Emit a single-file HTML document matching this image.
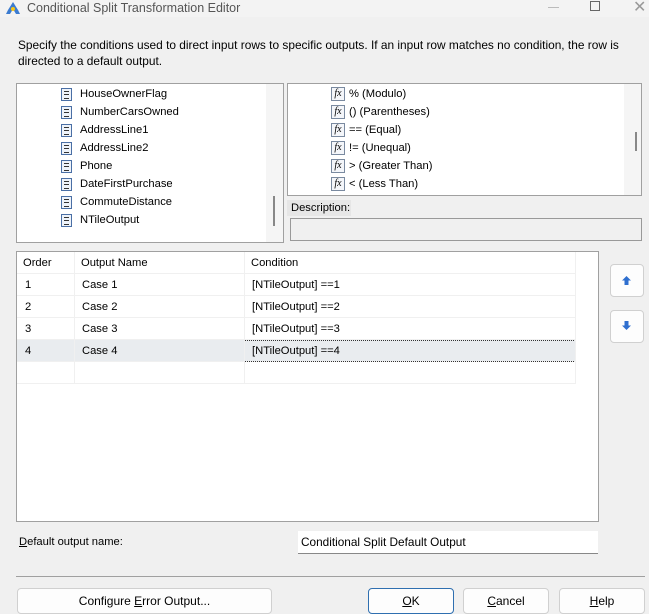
<!DOCTYPE html>
<html><head><style>
*{box-sizing:border-box;margin:0;padding:0}
body{width:649px;height:613px;background:#f0f0f0;font-family:"Liberation Sans",sans-serif;font-size:11.2px;color:#000;position:relative;overflow:hidden}
.a{position:absolute}
.t{position:absolute;white-space:nowrap}
.box{position:absolute;background:#fff;border:1px solid #a0a0a0}
.ic{position:absolute;width:11px;height:13px;border:1px solid #4a6fa5;background:#eef3fa}
.ic:before{content:"";position:absolute;left:2px;top:2px;width:5px;height:6px;border-top:1px solid #333;border-bottom:1px solid #333}
.ic:after{content:"";position:absolute;left:2px;top:5px;width:5px;border-top:1px solid #333}
.fx{position:absolute;width:14px;height:14px;border:1px solid #7a8aa0;background:#f4f6fa;font-family:"Liberation Serif",serif;font-style:italic;font-size:10px;line-height:12px;text-align:center}
.btn{position:absolute;background:#fdfdfd;border:1px solid #d0d0d0;border-radius:4px;text-align:center;font-size:12px;line-height:24px}
.row{position:absolute;left:0;width:559px;height:22px;border-bottom:1px solid #f0f0f0}
.row span{position:absolute;top:5px}
.vl{position:absolute;top:0;width:1px;background:#f0f0f0}
</style></head><body>
<div class="a" style="left:0;top:0;width:649px;height:17px;background:#f3f3f3"></div>
<svg class="a" style="left:5px;top:1px" width="16" height="14"><path d="M8 1 L3 9 L1 13 L5 13 L8 8 L11 13 L15 13 L13 9Z" fill="#3b7bd0"/><circle cx="8" cy="8" r="2" fill="#f5c518"/></svg>
<div class="t" style="left:27px;top:1px;font-size:12.5px;color:#555">Conditional Split Transformation Editor</div>
<div class="a" style="left:548px;top:7px;width:11px;border-top:1px solid #bbb"></div>
<div class="a" style="left:590px;top:1px;width:10px;height:10px;border:1px solid #666"></div>
<div class="t" style="left:633px;top:-3px;font-size:16px;color:#999">✕</div>

<div class="t" style="left:18px;top:38px;font-size:11.9px">Specify the conditions used to direct input rows to specific outputs. If an input row matches no condition, the row is</div>
<div class="t" style="left:18px;top:54px;font-size:11.9px">directed to a default output.</div>

<div class="box" style="left:16px;top:83px;width:268px;height:160px">
<div class="a" style="left:249px;top:0;width:17px;height:158px;background:#f5f5f5"></div>
<div class="a" style="left:256px;top:112px;width:2px;height:30px;background:#888"></div>
</div>

<div class="box" style="left:287px;top:83px;width:355px;height:113px">
<div class="a" style="left:336px;top:0;width:17px;height:111px;background:#f5f5f5"></div>
<div class="a" style="left:347px;top:48px;width:2px;height:19px;background:#888"></div>
</div>
<div class="a" style="left:287px;top:200px;width:64px;height:16px;background:#e6e6e6"></div>
<div class="t" style="left:291px;top:202px">Description:</div>
<div class="a" style="left:290px;top:218px;width:352px;height:23px;border:1px solid #999;background:#f0f0f0"></div>

<div class="box" style="left:16px;top:251px;width:583px;height:271px">
<div class="row" style="top:0;background:#fff"><span style="left:6px">Order</span><span style="left:64px">Output Name</span><span style="left:234px">Condition</span></div>
<div class="row" style="top:22px"><span style="left:8px">1</span><span style="left:65px">Case 1</span><span style="left:235px">[NTileOutput] ==1</span></div>
<div class="row" style="top:44px"><span style="left:8px">2</span><span style="left:65px">Case 2</span><span style="left:235px">[NTileOutput] ==2</span></div>
<div class="row" style="top:66px"><span style="left:8px">3</span><span style="left:65px">Case 3</span><span style="left:235px">[NTileOutput] ==3</span></div>
<div class="row" style="top:88px;background:#e9ecef"><span style="left:8px">4</span><span style="left:65px">Case 4</span><span style="left:235px">[NTileOutput] ==4</span>
<div class="a" style="left:227px;top:0;width:332px;height:22px;border:1px dotted #333"></div></div>
<div class="row" style="top:110px"></div>
<div class="vl" style="left:57px;height:132px"></div>
<div class="vl" style="left:227px;height:132px"></div>
<div class="vl" style="left:558px;height:132px"></div>
</div>

<div class="btn" style="left:610px;top:264px;width:34px;height:33px"></div>
<svg class="a" style="left:622px;top:276px" width="9" height="9"><path d="M4.5 0 L9 4.5 L6.5 4.5 L6.5 9 L2.5 9 L2.5 4.5 L0 4.5Z" fill="#2f6fcf"/></svg>
<div class="btn" style="left:610px;top:310px;width:34px;height:33px"></div>
<svg class="a" style="left:622px;top:321px" width="9" height="9"><path d="M4.5 9 L9 4.5 L6.5 4.5 L6.5 0 L2.5 0 L2.5 4.5 L0 4.5Z" fill="#2f6fcf"/></svg>

<div class="t" style="left:19px;top:536px"><u>D</u>efault output name:</div>
<div class="a" style="left:298px;top:531px;width:300px;height:23px;background:#fff;border-bottom:1px solid #888"></div>
<div class="t" style="left:301px;top:535px;font-size:11.8px">Conditional Split Default Output</div>

<div class="a" style="left:16px;top:576px;width:629px;border-top:1px solid #a0a0a0"></div>
<div class="btn" style="left:17px;top:588px;width:255px;height:26px">Configure <u>E</u>rror Output...</div>
<div class="btn" style="left:368px;top:588px;width:86px;height:26px;border:1px solid #2f6fb0"><u>O</u>K</div>
<div class="btn" style="left:463px;top:588px;width:86px;height:26px"><u>C</u>ancel</div>
<div class="btn" style="left:559px;top:588px;width:86px;height:26px"><u>H</u>elp</div>

<div class="ic" style="left:61px;top:88px"></div><div class="t" style="left:80px;top:88px">HouseOwnerFlag</div>
<div class="ic" style="left:61px;top:106px"></div><div class="t" style="left:80px;top:106px">NumberCarsOwned</div>
<div class="ic" style="left:61px;top:124px"></div><div class="t" style="left:80px;top:124px">AddressLine1</div>
<div class="ic" style="left:61px;top:142px"></div><div class="t" style="left:80px;top:142px">AddressLine2</div>
<div class="ic" style="left:61px;top:160px"></div><div class="t" style="left:80px;top:160px">Phone</div>
<div class="ic" style="left:61px;top:178px"></div><div class="t" style="left:80px;top:178px">DateFirstPurchase</div>
<div class="ic" style="left:61px;top:196px"></div><div class="t" style="left:80px;top:196px">CommuteDistance</div>
<div class="ic" style="left:61px;top:214px"></div><div class="t" style="left:80px;top:214px">NTileOutput</div>

<div class="fx" style="left:331px;top:87px">fx</div><div class="t" style="left:349px;top:88px">% (Modulo)</div>
<div class="fx" style="left:331px;top:105px">fx</div><div class="t" style="left:349px;top:106px">() (Parentheses)</div>
<div class="fx" style="left:331px;top:123px">fx</div><div class="t" style="left:349px;top:124px">== (Equal)</div>
<div class="fx" style="left:331px;top:141px">fx</div><div class="t" style="left:349px;top:142px">!= (Unequal)</div>
<div class="fx" style="left:331px;top:159px">fx</div><div class="t" style="left:349px;top:160px">&gt; (Greater Than)</div>
<div class="fx" style="left:331px;top:177px">fx</div><div class="t" style="left:349px;top:178px">&lt; (Less Than)</div>
</body></html>
